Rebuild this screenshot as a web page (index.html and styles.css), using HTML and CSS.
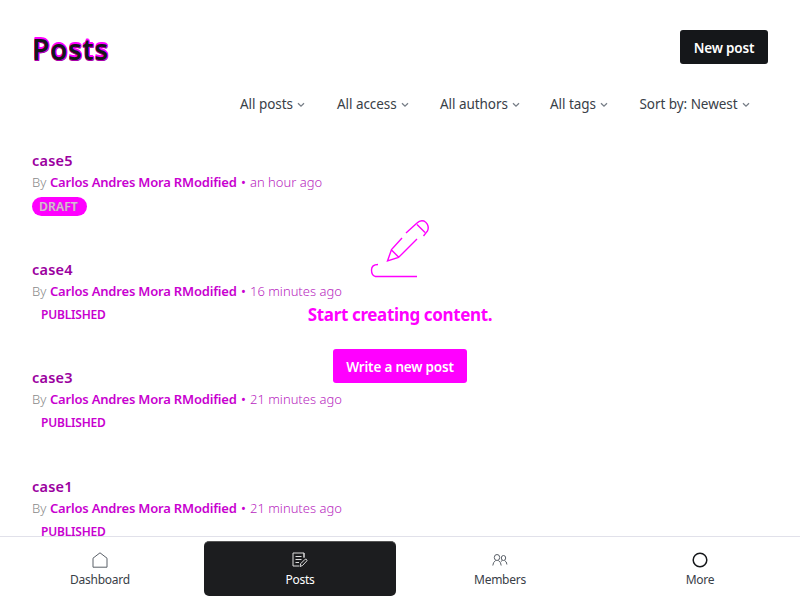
FILE: index.html
```html
<!DOCTYPE html>
<html lang="en">
<head>
<meta charset="utf-8">
<title>Posts</title>
<link rel="stylesheet" href="styles.css">
</head>
<body>
<div class="app">
  <main class="main">
    <header class="header">
      <h1 class="title">Posts</h1>
      <button class="button"><span>New post</span></button>
    </header>
    <div class="filters">
      <div class="filter f1"><span>All posts</span><svg viewBox="0 0 8 6"><path d="M1 1.2l3 3 3-3"/></svg></div>
      <div class="filter f2"><span>All access</span><svg viewBox="0 0 8 6"><path d="M1 1.2l3 3 3-3"/></svg></div>
      <div class="filter f3"><span>All authors</span><svg viewBox="0 0 8 6"><path d="M1 1.2l3 3 3-3"/></svg></div>
      <div class="filter f4"><span>All tags</span><svg viewBox="0 0 8 6"><path d="M1 1.2l3 3 3-3"/></svg></div>
      <div class="filter f5"><span>Sort by: Newest</span><svg viewBox="0 0 8 6"><path d="M1 1.2l3 3 3-3"/></svg></div>
    </div>
    <section class="posts">
      <article class="post">
        <h3 class="name">case5</h3>
        <p class="meta"><span class="by">By</span><b class="author">Carlos Andres Mora RModified</b><i class="dot">•</i><span class="time">an hour ago</span></p>
        <span class="badge draft">DRAFT</span>
      </article>
      <article class="post">
        <h3 class="name">case4</h3>
        <p class="meta"><span class="by">By</span><b class="author">Carlos Andres Mora RModified</b><i class="dot">•</i><span class="time">16 minutes ago</span></p>
        <span class="badge">PUBLISHED</span>
      </article>
      <article class="post">
        <h3 class="name">case3</h3>
        <p class="meta"><span class="by">By</span><b class="author">Carlos Andres Mora RModified</b><i class="dot">•</i><span class="time">21 minutes ago</span></p>
        <span class="badge">PUBLISHED</span>
      </article>
      <article class="post">
        <h3 class="name">case1</h3>
        <p class="meta"><span class="by">By</span><b class="author">Carlos Andres Mora RModified</b><i class="dot">•</i><span class="time">21 minutes ago</span></p>
        <span class="badge">PUBLISHED</span>
      </article>
    </section>
  </main>
  <div class="empty">
    <svg class="pencil" viewBox="0 0 60 60"><path d="M36 14L47 4Q50 .8 54 2Q60 6 57.500 12L53.500 17M47 5.500L55 13.500M32 19L21.500 30.500L17.500 42L28.500 38.500L47 20M21.500 31L28.500 38M8 45.500Q1.500 45.500 1.500 51T5.500 57.500H47"/></svg>
    <h2 class="prompt">Start creating content.</h2>
    <button class="button write"><span>Write a new post</span></button>
  </div>
  <nav class="nav">
    <a class="tab"><svg viewBox="0 0 16 16"><path d="M1 6.200L8 .8l7 5.400v9H1z"/></svg><span class="t1">Dashboard</span></a>
    <a class="tab active"><svg viewBox="0 0 16 16"><path d="M12 6V1H1v13h6M12 1v4M3.500 4.500h6M3.500 7.500h6M3.500 10.500h3.500M8 14.500l.7-2.800 4.500-4.500q1.500-.5 1.800 1.500l-4.500 4.800z"/></svg><span class="t2">Posts</span></a>
    <a class="tab"><svg viewBox="0 0 16 16"><ellipse cx="5" cy="5.500" rx="2.700" ry="3"/><ellipse cx="11.500" cy="6" rx="2.200" ry="2.500"/><path d="M.8 13.500q.2-3.500 2.900-5M6.300 8.500q2.800 1.500 2.900 5M12.600 8.500q2.200 1 2.300 4M10.400 8.500l-1.600 1"/></svg><span class="t3">Members</span></a>
    <a class="tab"><svg class="more" viewBox="0 0 16 16"><circle cx="8" cy="8" r="6.800"/></svg><span class="t4">More</span></a>
  </nav>
</div>
</body>
</html>
```
FILE: styles.css
```css
* { box-sizing: border-box; }
body { margin: 0; background: #fff; font-family: "Noto Sans", "Open Sans", sans-serif; color: #394047; }
h1, h2, h3, p { margin: 0; }
svg { fill: none; stroke: currentColor; display: block; }
.app { position: relative; width: 800px; height: 600px; overflow: hidden; display: flex; flex-direction: column; }
.main { flex: 1; min-height: 0; overflow: hidden; padding: 30px 32px 0; }
.header { display: flex; justify-content: space-between; height: 38px; }
.title { font-size: 28.500px; line-height: 38px; font-weight: 600; color: #15171a; text-shadow: 0 -1px #f0f, 1px -1px #f0f, 1px 0 #f0f, 0 1px #a0a, 1px 1px #a0a, 0 -2px #f0f; letter-spacing: .4px; }
.button { width: 88px; height: 34px; padding: 0; border: 0; border-radius: 3px; background: #15171a; color: #fff; font: 600 13.500px/36px "Noto Sans", sans-serif; letter-spacing: -.2px; white-space: nowrap; }
.filters { display: flex; height: 20px; margin-top: 26px; padding-left: 208px; font-size: 13.500px; line-height: 20px; white-space: nowrap; letter-spacing: -.05px; }
.filter { display: flex; align-items: center; gap: 4px; }
.filter svg { width: 8px; height: 6px; stroke: #777e87; stroke-width: 1.300; margin-top: 2px; }
.f1 { width: 97px; } .f2 { width: 103px; } .f3 { width: 110px; } .f4 { width: 89.500px; }
.posts { margin-top: 35px; }
.post { height: 108.500px; }
.name { font-size: 14.500px; line-height: 22px; font-weight: 600; letter-spacing: .2px; color: #9b009f; }
.meta { display: flex; height: 22px; font-size: 13px; line-height: 22px; white-space: nowrap; color: #b81fc0; }
.by { width: 18px; font-weight: 300; color: #888; }
.author { width: 187px; font-weight: 600; letter-spacing: -.19px; color: #c800d0; }
.dot { width: 13px; padding-left: 4px; font-style: normal; color: #c800d0; }
.time { font-weight: 300; }
.badge { display: block; width: max-content; height: 19px; margin-top: 3px; padding-left: 9px; font-size: 12px; line-height: 19px; font-weight: 600; letter-spacing: -.2px; color: #c800d0; }
.draft { width: 55px; margin-top: 4px; padding-left: 7px; border-radius: 10px; background: #f0f; color: #d8b8d8; text-shadow: 1px 0 #b55ab5; letter-spacing: .2px; }
.empty { position: absolute; left: 300px; top: 219px; width: 200px; display: flex; flex-direction: column; align-items: center; }
.pencil { width: 60px; height: 60px; stroke: #f0f; stroke-width: 1.400; }
.prompt { margin-top: 24px; font-size: 17px; line-height: 24px; font-weight: 700; letter-spacing: -.35px; color: #f0f; white-space: nowrap; }
.write { width: 134px; margin-top: 22px; background: #f0f; }
.nav { display: flex; height: 64px; flex-shrink: 0; padding: 4px 4px; gap: 8px; border-top: 1px solid #e1e1ea; background: #fff; }
.tab { flex: 1; height: 55px; padding-top: 11px; display: flex; flex-direction: column; align-items: center; border-radius: 5px; font-size: 12px; line-height: 18px; letter-spacing: -.25px; }
.tab svg { width: 16px; height: 16px; stroke: #5a6068; margin-bottom: 3px; }
.active { background: #1c1d1f; color: #fff; border-top: 1px solid #555; padding-top: 10px; }
.active svg { stroke: #ddd; }
.tab .more { stroke: #15171a; stroke-width: 1.500; }
```
